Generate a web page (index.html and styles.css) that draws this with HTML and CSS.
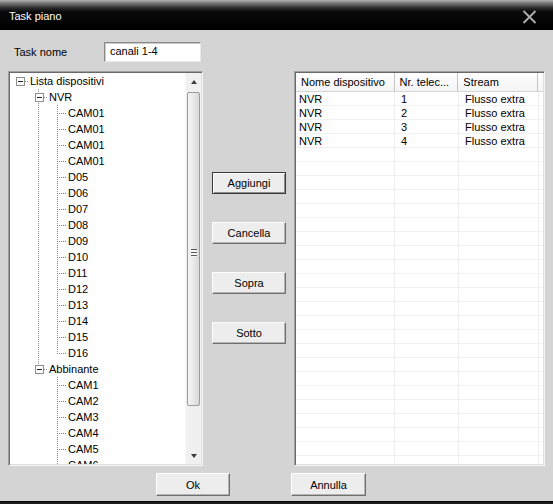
FILE: index.html
```html
<!DOCTYPE html>
<html>
<head>
<meta charset="utf-8">
<link rel="stylesheet" href="styles.css">
</head>
<body>
<div class="window">
  <div class="titlebar">
    <span class="title">Task piano</span>
    <svg class="close" width="15" height="14" viewBox="0 0 15 14"><path d="M1.5 1 L13.5 13 M13.5 1 L1.5 13" stroke="#b0b0b0" stroke-width="1.8" fill="none"/></svg>
  </div>
  <div class="content">
    <div class="name-row">
      <span class="label">Task nome</span>
      <div class="input">canali 1-4</div>
    </div>
    <div class="main">
      <div class="tree">
        <div class="tree-items">
          <div class="tr"><span class="tc h"><span class="box"></span></span><span class="tt">Lista dispositivi</span></div>
          <div class="tr"><span class="tc"></span><span class="tc vh"><span class="box"></span></span><span class="tt">NVR</span></div>
          <div class="tr"><span class="tc"></span><span class="tc v"></span><span class="tc vh"></span><span class="tt">CAM01</span></div>
          <div class="tr"><span class="tc"></span><span class="tc v"></span><span class="tc vh"></span><span class="tt">CAM01</span></div>
          <div class="tr"><span class="tc"></span><span class="tc v"></span><span class="tc vh"></span><span class="tt">CAM01</span></div>
          <div class="tr"><span class="tc"></span><span class="tc v"></span><span class="tc vh"></span><span class="tt">CAM01</span></div>
          <div class="tr"><span class="tc"></span><span class="tc v"></span><span class="tc vh"></span><span class="tt">D05</span></div>
          <div class="tr"><span class="tc"></span><span class="tc v"></span><span class="tc vh"></span><span class="tt">D06</span></div>
          <div class="tr"><span class="tc"></span><span class="tc v"></span><span class="tc vh"></span><span class="tt">D07</span></div>
          <div class="tr"><span class="tc"></span><span class="tc v"></span><span class="tc vh"></span><span class="tt">D08</span></div>
          <div class="tr"><span class="tc"></span><span class="tc v"></span><span class="tc vh"></span><span class="tt">D09</span></div>
          <div class="tr"><span class="tc"></span><span class="tc v"></span><span class="tc vh"></span><span class="tt">D10</span></div>
          <div class="tr"><span class="tc"></span><span class="tc v"></span><span class="tc vh"></span><span class="tt">D11</span></div>
          <div class="tr"><span class="tc"></span><span class="tc v"></span><span class="tc vh"></span><span class="tt">D12</span></div>
          <div class="tr"><span class="tc"></span><span class="tc v"></span><span class="tc vh"></span><span class="tt">D13</span></div>
          <div class="tr"><span class="tc"></span><span class="tc v"></span><span class="tc vh"></span><span class="tt">D14</span></div>
          <div class="tr"><span class="tc"></span><span class="tc v"></span><span class="tc vh"></span><span class="tt">D15</span></div>
          <div class="tr"><span class="tc"></span><span class="tc v"></span><span class="tc lh"></span><span class="tt">D16</span></div>
          <div class="tr"><span class="tc"></span><span class="tc lh"><span class="box"></span></span><span class="tt">Abbinante</span></div>
          <div class="tr"><span class="tc"></span><span class="tc"></span><span class="tc vh"></span><span class="tt">CAM1</span></div>
          <div class="tr"><span class="tc"></span><span class="tc"></span><span class="tc vh"></span><span class="tt">CAM2</span></div>
          <div class="tr"><span class="tc"></span><span class="tc"></span><span class="tc vh"></span><span class="tt">CAM3</span></div>
          <div class="tr"><span class="tc"></span><span class="tc"></span><span class="tc vh"></span><span class="tt">CAM4</span></div>
          <div class="tr"><span class="tc"></span><span class="tc"></span><span class="tc vh"></span><span class="tt">CAM5</span></div>
          <div class="tr"><span class="tc"></span><span class="tc"></span><span class="tc vh"></span><span class="tt">CAM6</span></div>
        </div>
        <div class="vscroll">
          <div class="sbtn"><span class="arrow-up"></span></div>
          <div class="track">
            <div class="thumb"><span class="grip"></span></div>
          </div>
          <div class="sbtn"><span class="arrow-down"></span></div>
        </div>
      </div>
      <div class="actions">
        <div class="btn default">Aggiungi</div>
        <div class="btn">Cancella</div>
        <div class="btn">Sopra</div>
        <div class="btn">Sotto</div>
      </div>
      <div class="list">
        <div class="lhead">
          <div class="hc c1">Nome dispositivo</div>
          <div class="hc c2">Nr. telec...</div>
          <div class="hc c3">Stream</div>
          <div class="hc cf"></div>
        </div>
        <div class="lbody">
          <div class="lr"><span class="lc c1">NVR</span><span class="lc c2">1</span><span class="lc c3">Flusso extra</span></div>
          <div class="lr"><span class="lc c1">NVR</span><span class="lc c2">2</span><span class="lc c3">Flusso extra</span></div>
          <div class="lr"><span class="lc c1">NVR</span><span class="lc c2">3</span><span class="lc c3">Flusso extra</span></div>
          <div class="lr"><span class="lc c1">NVR</span><span class="lc c2">4</span><span class="lc c3">Flusso extra</span></div>
        </div>
      </div>
    </div>
    <div class="footer">
      <div class="btn">Ok</div>
      <div class="btn wide">Annulla</div>
    </div>
  </div>
  <div class="bottom-edge"></div>
</div>
</body>
</html>
```
FILE: styles.css
```css
* { box-sizing: border-box; }
html, body { margin: 0; padding: 0; }
body {
  width: 553px;
  height: 504px;
  overflow: hidden;
  font-family: "Liberation Sans", Arial, sans-serif;
  font-size: 11px;
  color: #000;
  background: #d4d4d4;
}
.window {
  width: 553px;
  height: 504px;
  display: flex;
  flex-direction: column;
  background: #d4d4d4;
}
.titlebar {
  height: 30px;
  flex: none;
  display: flex;
  align-items: center;
  justify-content: space-between;
  padding: 1px 16px 0 9px;
  background: linear-gradient(to bottom, #b0b0b0 0, #7a7a7a 3px, #2a2a2a 8px, #080808 12px, #000 30px);
}
.title {
  color: #fff;
  font-size: 11px;
}
.close { display: block; margin-top: 2px; }
.content {
  flex: 1;
  display: flex;
  flex-direction: column;
}
.name-row {
  margin-top: 12px;
  height: 20px;
  display: flex;
  align-items: center;
  padding-left: 14px;
}
.label { width: 90px; }
.input {
  width: 97px;
  height: 20px;
  background: #fff;
  border: 1px solid;
  border-color: #8a8a8a #e8e8e8 #e8e8e8 #8a8a8a;
  box-shadow: inset 1px 1px 0 #c8c8c8;
  padding: 0 0 0 5px;
  line-height: 17px;
}
.main {
  margin-top: 9px;
  height: 395px;
  display: flex;
  padding-left: 8px;
}
.tree {
  width: 195px;
  height: 395px;
  display: flex;
  background: #fff;
  border: 1px solid;
  border-color: #a0a0a0 #f4f4f4 #f4f4f4 #a0a0a0;
  box-shadow: inset 1px 1px 0 #696969, inset -1px -1px 0 #e0e0e0;
  padding: 1px;
}
.tree-items {
  flex: 1;
  overflow: hidden;
}
.tr {
  height: 16px;
  display: flex;
  align-items: center;
  white-space: nowrap;
}
.tc {
  width: 19px;
  height: 16px;
  flex: none;
  display: flex;
  align-items: center;
  justify-content: center;
  background-repeat: no-repeat;
}
.tc.v {
  background-image: repeating-linear-gradient(to bottom, #8c8c8c 0 1px, transparent 1px 2px);
  background-size: 1px 16px;
  background-position: 9px 0;
}
.tc.vh {
  background-image: repeating-linear-gradient(to bottom, #8c8c8c 0 1px, transparent 1px 2px),
                    repeating-linear-gradient(to right, #8c8c8c 0 1px, transparent 1px 2px);
  background-size: 1px 16px, 9px 1px;
  background-position: 9px 0, 11px 8px;
}
.tc.lh {
  background-image: repeating-linear-gradient(to bottom, #8c8c8c 0 1px, transparent 1px 2px),
                    repeating-linear-gradient(to right, #8c8c8c 0 1px, transparent 1px 2px);
  background-size: 1px 9px, 9px 1px;
  background-position: 9px 0, 11px 8px;
}
.tc.h {
  background-image: repeating-linear-gradient(to right, #8c8c8c 0 1px, transparent 1px 2px);
  background-size: 9px 1px;
  background-position: 11px 8px;
}
.box {
  width: 9px;
  height: 9px;
  margin-left: 1px;
  border: 1px solid #8e8e8e;
  background: #fff linear-gradient(#222, #222) no-repeat center / 5px 1px;
}
.tt {
  padding-left: 1px;
  line-height: 16px;
}
.vscroll {
  width: 16px;
  flex: none;
  display: flex;
  flex-direction: column;
  background: #f0f0f0;
  border-left: 1px solid #f7f7f7;
}
.sbtn {
  height: 17px;
  flex: none;
  display: flex;
  align-items: center;
  justify-content: center;
}
.arrow-up {
  width: 0; height: 0;
  border-left: 3.5px solid transparent;
  border-right: 3.5px solid transparent;
  border-bottom: 4px solid #3c3c3c;
}
.arrow-down {
  width: 0; height: 0;
  border-left: 3.5px solid transparent;
  border-right: 3.5px solid transparent;
  border-top: 4px solid #3c3c3c;
}
.track {
  flex: 1;
  padding: 2px 1px 0 1px;
}
.thumb {
  height: 314px;
  border: 1px solid #9c9c9c;
  border-radius: 2px;
  background: linear-gradient(to right, #f3f3f3 0, #ebebeb 45%, #d8d8d8 100%);
  display: flex;
  align-items: center;
  justify-content: center;
}
.grip {
  width: 6px;
  height: 8px;
  margin-top: 8px;
  background: repeating-linear-gradient(to bottom, #5a5a5a 0 1px, #f6f6f6 1px 3px);
}
.actions {
  width: 91px;
  flex: none;
  display: flex;
  flex-direction: column;
  padding: 101px 0 0 9px;
  gap: 28px;
}
.btn {
  width: 74px;
  height: 22px;
  display: flex;
  align-items: center;
  justify-content: center;
  background: #ededed;
  border: 1px solid;
  border-color: #fdfdfd #6f6f6f #6f6f6f #fdfdfd;
  box-shadow: inset -1px -1px 0 #b4b4b4;
}
.btn.default {
  border-color: #3a3a3a;
  box-shadow: inset 1px 1px 0 #fff, inset -1px -1px 0 #8c8c8c;
}
.list {
  width: 251px;
  height: 395px;
  display: flex;
  flex-direction: column;
  background: #fff;
  border: 1px solid;
  border-color: #a0a0a0 #f4f4f4 #f4f4f4 #a0a0a0;
  box-shadow: inset 1px 1px 0 #696969, inset -1px -1px 0 #e0e0e0;
  padding: 1px;
}
.lhead {
  height: 19px;
  flex: none;
  display: flex;
  background: linear-gradient(to bottom, #ffffff, #f4f4f4);
  border-bottom: 1px solid #d5d5d5;
}
.hc {
  border-right: 1px solid #c4c4c4;
  padding-left: 5px;
  line-height: 18px;
  white-space: nowrap;
  overflow: hidden;
}
.hc.cf { flex: 1; border-right: none; }
.c1 { width: 99px; }
.c2 { width: 64px; }
.c3 { width: 80px; }
.lbody {
  flex: 1;
  background-image:
    linear-gradient(#eeeeee, #eeeeee),
    linear-gradient(#eeeeee, #eeeeee),
    linear-gradient(#eeeeee, #eeeeee),
    repeating-linear-gradient(to bottom, transparent 0 13px, #f1f1f1 13px 14px);
  background-size: 1px 100%, 1px 100%, 1px 100%, 100% 100%;
  background-position: 98px 0, 162px 0, 242px 0, 0 0;
  background-repeat: no-repeat, no-repeat, no-repeat, repeat;
}
.lr {
  height: 14px;
  display: flex;
  line-height: 14px;
  white-space: nowrap;
}
.lc { padding-left: 6px; flex: none; }
.lc.c1 { padding-left: 3px; }
.footer {
  margin-top: 7px;
  display: flex;
  padding-left: 156px;
  gap: 61px;
}
.footer .btn { height: 23px; }
.btn.wide { width: 75px; }
.bottom-edge {
  height: 3px;
  flex: none;
  background: #1c1c1c;
  border-top: 1px solid #0a0a0a;
}
```
